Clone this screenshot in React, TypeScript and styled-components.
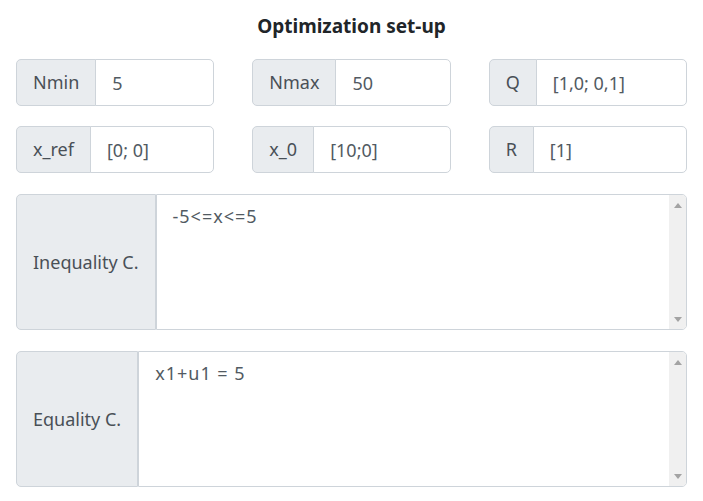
import React from 'react';
import styled, { createGlobalStyle } from 'styled-components';

const GlobalStyle = createGlobalStyle`
  html, body {
    margin: 0;
    padding: 0;
    background: #fff;
  }

  body {
    font-family: 'Noto Sans', 'Open Sans', sans-serif;
    color: #212529;
  }

  * {
    box-sizing: border-box;
  }
`;

const StyledSetup = styled.div`
  width: 703px;
  padding: 14px 16px 0;
`;

const Title = styled.h3`
  margin: 0 0 21px;
  font-size: 19px;
  font-weight: 700;
  line-height: 24px;
  text-align: center;
  color: #212529;
`;

const FieldGrid = styled.div`
  display: grid;
  grid-template-columns: repeat(3, minmax(0, 1fr));
  column-gap: 38px;
  row-gap: 20px;
  margin-bottom: 21px;
`;

const InputGroup = styled.div<{ $tall?: boolean }>`
  display: flex;
  align-items: stretch;
  min-width: 0;
  height: ${(p) => (p.$tall ? '136px' : '47px')};
  margin-bottom: ${(p) => (p.$tall ? '21px' : '0')};
  font-size: 18px;
  color: #495057;
`;

const Addon = styled.span`
  display: flex;
  align-items: center;
  flex: none;
  padding: 0 16px;
  background: #e9ecef;
  border: 1px solid #ced4da;
  border-radius: 5px 0 0 5px;
  white-space: nowrap;
  line-height: 1.5;
`;

const TextInput = styled.input`
  flex: 1;
  width: 0;
  min-width: 0;
  margin-left: -1px;
  padding: 0 16px;
  border: 1px solid #ced4da;
  border-radius: 0 5px 5px 0;
  font: inherit;
  color: #525a62;
  background: #fff;
  outline: none;
`;

const AreaBox = styled.div`
  flex: 1;
  display: flex;
  min-width: 0;
  border: 1px solid #ced4da;
  border-radius: 0 5px 5px 0;
  overflow: hidden;
  background: #fff;
`;

const TextArea = styled.textarea`
  flex: 1;
  min-width: 0;
  padding: 8px 16px;
  border: none;
  resize: none;
  overflow: hidden;
  font: inherit;
  line-height: 1.5;
  letter-spacing: 1px;
  color: #525a62;
  background: transparent;
  outline: none;
`;

const ScrollTrack = styled.div`
  width: 17px;
  display: flex;
  flex-direction: column;
  justify-content: space-between;
  background: #f0f0f0;
`;

const ScrollArrow = styled.span<{ $down?: boolean }>`
  display: flex;
  align-items: center;
  justify-content: center;
  height: 20px;

  &::before {
    content: '';
    width: 0;
    height: 0;
    border-left: 4.5px solid transparent;
    border-right: 4.5px solid transparent;
    ${(p) =>
      p.$down
        ? 'border-top: 5px solid #a3a3a3;'
        : 'border-bottom: 5px solid #a3a3a3;'}
  }
`;

const fields = [
  { label: 'Nmin', value: '5' },
  { label: 'Nmax', value: '50' },
  { label: 'Q', value: '[1,0; 0,1]' },
  { label: 'x_ref', value: '[0; 0]' },
  { label: 'x_0', value: '[10;0]' },
  { label: 'R', value: '[1]' },
];

const constraints = [
  { label: 'Inequality C.', value: '-5<=x<=5' },
  { label: 'Equality C.', value: 'x1+u1 = 5' },
];

export default function App() {
  return (
    <>
      <GlobalStyle />
      <StyledSetup>
        <Title>Optimization set-up</Title>
        <FieldGrid>
          {fields.map((field) => (
            <InputGroup key={field.label}>
              <Addon>{field.label}</Addon>
              <TextInput defaultValue={field.value} />
            </InputGroup>
          ))}
        </FieldGrid>
        {constraints.map((item) => (
          <InputGroup $tall key={item.label}>
            <Addon>{item.label}</Addon>
            <AreaBox>
              <TextArea defaultValue={item.value} />
              <ScrollTrack>
                <ScrollArrow />
                <ScrollArrow $down />
              </ScrollTrack>
            </AreaBox>
          </InputGroup>
        ))}
      </StyledSetup>
    </>
  );
}
